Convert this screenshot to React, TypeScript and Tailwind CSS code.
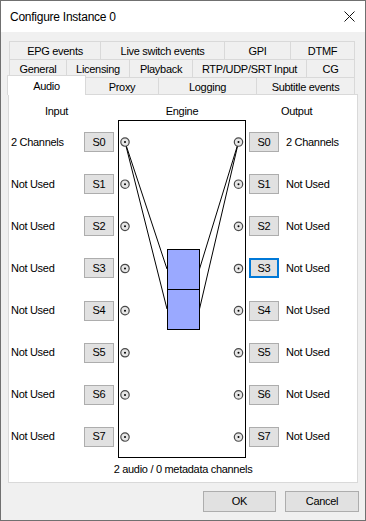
const tabRow1: [string, number][] = [
  ['EPG events', 92],
  ['Live switch events', 124],
  ['GPI', 66],
  ['DTMF', 64],
];
const tabRow2: [string, number][] = [
  ['General', 58],
  ['Licensing', 63],
  ['Playback', 63],
  ['RTP/UDP/SRT Input', 114],
  ['CG', 48],
];
const tabRow3: [string, number][] = [
  ['Proxy', 73],
  ['Logging', 98],
  ['Subtitle events', 98],
];

const inputs = ['2 Channels', 'Not Used', 'Not Used', 'Not Used', 'Not Used', 'Not Used', 'Not Used', 'Not Used'];
const outputs = ['2 Channels', 'Not Used', 'Not Used', 'Not Used', 'Not Used', 'Not Used', 'Not Used', 'Not Used'];
const ROW = 42.14;

function TabRow({ tabs, className = '' }: { tabs: [string, number][]; className?: string }) {
  return (
    <div className={`flex ${className}`}>
      {tabs.map(([label, w], i) => (
        <div
          key={label}
          style={{ width: w }}
          className={`flex h-[18px] items-center justify-center border-t border-r border-[#d9d9d9] pt-[1px] ${i === 0 ? 'border-l' : ''}`}
        >
          {label}
        </div>
      ))}
    </div>
  );
}

function Btn({ label, focused = false }: { label: string; focused?: boolean }) {
  return (
    <div
      className={`flex h-[20px] w-[30px] items-center justify-center bg-[#e1e1e1] ${
        focused ? 'border-2 border-[#0078d7]' : 'border border-[#adadad]'
      }`}
    >
      {label}
    </div>
  );
}

function Engine() {
  const ys = inputs.map((_, i) => 21.07 + i * ROW);
  return (
    <div className="relative h-[338px] w-[128px] border border-black bg-white">
      <svg className="absolute left-0 top-0" width="126" height="336" viewBox="0 0 126 336">
        <g stroke="#000" strokeWidth="1" fill="none">
          <line x1="6" y1="21" x2="48" y2="148" />
          <line x1="6" y1="21" x2="48" y2="188" />
          <line x1="119.5" y1="21" x2="80.5" y2="148" />
          <line x1="119.5" y1="21" x2="80.5" y2="188" />
        </g>
        <rect x="48.5" y="128.5" width="32" height="40" fill="#9aa9ff" stroke="#000" />
        <rect x="48.5" y="168.5" width="32" height="40" fill="#9aa9ff" stroke="#000" />
        {ys.map((y, i) => (
          <g key={i}>
            <circle cx="6" cy={y} r="4.2" fill="#e6e6e6" stroke="#4a4a4a" strokeWidth="1.2" />
            <circle cx="6" cy={y} r="1" fill="#000" />
            <circle cx="119.5" cy={y} r="4.2" fill="#e6e6e6" stroke="#4a4a4a" strokeWidth="1.2" />
            <circle cx="119.5" cy={y} r="1" fill="#000" />
          </g>
        ))}
      </svg>
    </div>
  );
}

export default function App() {
  return (
    <div className="flex h-[521px] w-[366px] flex-col border border-[#707070] bg-[#f0f0f0] font-['Liberation_Sans',Arial,sans-serif] text-[11px] tracking-[-0.3px] text-black">
      {/* Title bar */}
      <div className="flex h-[31px] items-center justify-between bg-white pl-[9px] pr-[10px]">
        <span className="text-[12px] tracking-[-0.25px]">Configure Instance 0</span>
        <svg width="11" height="11" viewBox="0 0 11 11">
          <path d="M0.5 0.5 L10.5 10.5 M10.5 0.5 L0.5 10.5" stroke="#111" strokeWidth="1" />
        </svg>
      </div>

      <div className="flex flex-1 flex-col px-[7px] pt-[9px]">
        {/* Tabs */}
        <div className="ml-[1px] flex flex-col leading-[13px]">
          <TabRow tabs={tabRow1} />
          <TabRow tabs={tabRow2} />
          <div className="flex h-[17px] items-end">
            <div className="relative z-10 -mb-[1px] -ml-[2px] flex h-[20px] w-[79px] items-start justify-center border-t border-l border-r border-[#d9d9d9] bg-white pt-[4px]">
              Audio
            </div>
            {tabRow3.map(([label, w]) => (
              <div
                key={label}
                style={{ width: w }}
                className="flex h-[17px] items-center justify-center border-t border-r border-[#d9d9d9] pt-[2px]"
              >
                {label}
              </div>
            ))}
          </div>
        </div>

        {/* Panel */}
        <div className="flex h-[389px] w-[350px] flex-col border border-[#d9d9d9] bg-white leading-[13px]">
          <div className="flex h-[25px] pt-[10px]">
            <div className="w-[109px] pl-[36px]">Input</div>
            <div className="w-[128px] text-center">Engine</div>
            <div className="pl-[35px]">Output</div>
          </div>
          <div className="flex">
            <div className="flex w-[109px] flex-col pt-[1px]">
              {inputs.map((t, i) => (
                <div key={i} style={{ height: ROW }} className="flex items-center pl-[2px]">
                  <span className="flex-1">{t}</span>
                  <div className="mr-[4px]">
                    <Btn label={`S${i}`} />
                  </div>
                </div>
              ))}
            </div>
            <Engine />
            <div className="flex flex-col pt-[1px]">
              {outputs.map((t, i) => (
                <div key={i} style={{ height: ROW }} className="flex items-center pl-[3px]">
                  <Btn label={`S${i}`} focused={i === 3} />
                  <span className="ml-[7px]">{t}</span>
                </div>
              ))}
            </div>
          </div>
          <div className="mt-[5px] text-center">2 audio / 0 metadata channels</div>
        </div>

        {/* Buttons */}
        <div className="-mr-[1px] mt-[8px] flex justify-end gap-[9px]">
          <div className="flex h-[21px] w-[73px] items-center justify-center border border-[#adadad] bg-[#e1e1e1]">OK</div>
          <div className="flex h-[21px] w-[74px] items-center justify-center border border-[#adadad] bg-[#e1e1e1]">Cancel</div>
        </div>
      </div>
    </div>
  );
}
